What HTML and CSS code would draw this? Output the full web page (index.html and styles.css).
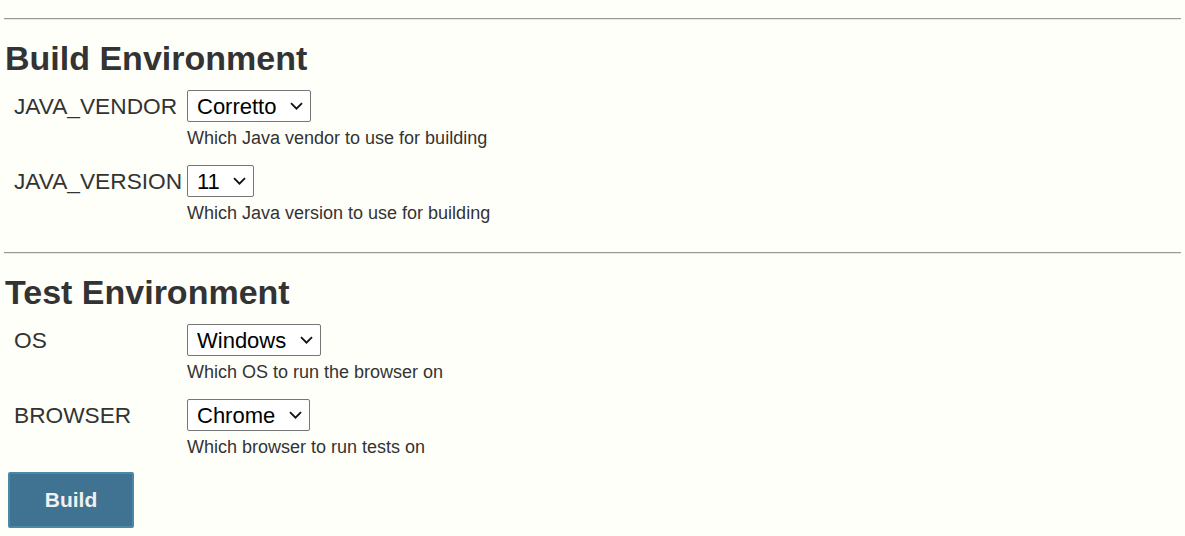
FILE: index.html
```html
<!DOCTYPE html>
<html>
<head>
<meta charset="utf-8">
<link rel="stylesheet" href="styles.css">
</head>
<body>
<form class="params">
  <hr class="sep">
  <h2 class="section-title">Build Environment</h2>
  <div class="param">
    <label class="param-name">JAVA_VENDOR</label>
    <div class="select-wrap">
      <select class="select"><option>Corretto</option></select>
      <svg class="chev" width="13" height="8" viewBox="0 0 13 8"><path d="M1 1.2 L6.5 6.7 L12 1.2" fill="none" stroke="#111" stroke-width="1.8"/></svg>
    </div>
    <div class="param-desc">Which Java vendor to use for building</div>
  </div>
  <div class="param">
    <label class="param-name">JAVA_VERSION</label>
    <div class="select-wrap">
      <select class="select"><option>11</option></select>
      <svg class="chev" width="13" height="8" viewBox="0 0 13 8"><path d="M1 1.2 L6.5 6.7 L12 1.2" fill="none" stroke="#111" stroke-width="1.8"/></svg>
    </div>
    <div class="param-desc">Which Java version to use for building</div>
  </div>
  <hr class="sep sep-2">
  <h2 class="section-title">Test Environment</h2>
  <div class="param">
    <label class="param-name">OS</label>
    <div class="select-wrap">
      <select class="select"><option>Windows</option></select>
      <svg class="chev" width="13" height="8" viewBox="0 0 13 8"><path d="M1 1.2 L6.5 6.7 L12 1.2" fill="none" stroke="#111" stroke-width="1.8"/></svg>
    </div>
    <div class="param-desc">Which OS to run the browser on</div>
  </div>
  <div class="param">
    <label class="param-name">BROWSER</label>
    <div class="select-wrap">
      <select class="select"><option>Chrome</option></select>
      <svg class="chev" width="13" height="8" viewBox="0 0 13 8"><path d="M1 1.2 L6.5 6.7 L12 1.2" fill="none" stroke="#111" stroke-width="1.8"/></svg>
    </div>
    <div class="param-desc">Which browser to run tests on</div>
  </div>
  <div class="actions">
    <button type="button" class="build-btn">Build</button>
  </div>
</form>
</body>
</html>
```

FILE: styles.css
```css
html, body {
  margin: 0;
  padding: 0;
  background: #fffffa;
}
body {
  font-family: "Liberation Sans", Arial, sans-serif;
  color: #333;
}
.params {
  padding: 0 4px;
}
.sep {
  margin: 18px 0 0 0;
  height: 0;
  border: 0;
  border-top: 1px solid #999;
  border-bottom: 1px solid #e8e8e2;
}
.sep-2 {
  margin-top: 28px;
}
.section-title {
  margin: 0;
  padding: 18px 0 0 1px;
  font-size: 34px;
  line-height: 40px;
  font-weight: bold;
  color: #333;
}
.param {
  display: grid;
  grid-template-columns: 183px auto;
  align-items: baseline;
  padding-top: 12px;
}
.param + .param {
  padding-top: 16px;
}
.param-name {
  grid-column: 1;
  grid-row: 1;
  padding-left: 10px;
  font-size: 22.7px;
}
.select-wrap {
  grid-column: 2;
  grid-row: 1;
  position: relative;
  justify-self: start;
  display: flex;
}
.select {
  appearance: none;
  -webkit-appearance: none;
  font-family: "Liberation Sans", Arial, sans-serif;
  font-size: 22px;
  color: #000;
  background: #fff;
  border: 1px solid #767676;
  border-radius: 2px;
  height: 32px;
  padding: 0 33px 0 9px;
  margin: 0;
}
.chev {
  position: absolute;
  right: 8px;
  top: 12px;
  pointer-events: none;
}
.param-desc {
  grid-column: 2;
  grid-row: 2;
  font-size: 18px;
  line-height: 21px;
  padding-top: 6px;
  color: #333;
}
.actions {
  padding-top: 14px;
}
.build-btn {
  margin-left: 4px;
  width: 126px;
  height: 56px;
  background: #3f7391;
  border: 2px solid #4b87a6;
  border-radius: 2px;
  color: #f0f0f0;
  font-family: "Liberation Sans", Arial, sans-serif;
  font-size: 21px;
  font-weight: bold;
  padding: 0;
}
```
